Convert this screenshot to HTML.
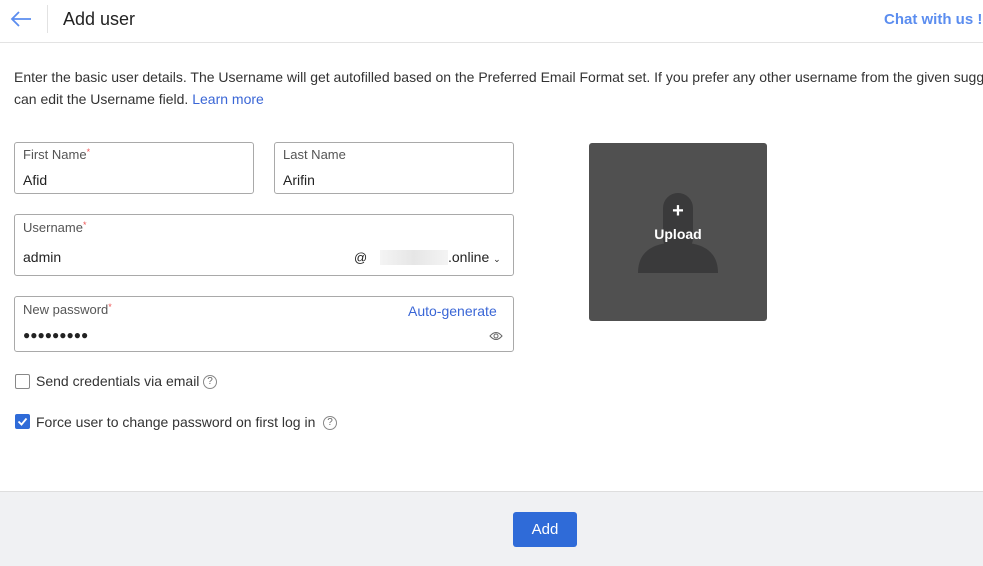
<!DOCTYPE html>
<html><head><style>
*{box-sizing:border-box;margin:0;padding:0}
html,body{width:983px;height:566px;overflow:hidden}
body{background:#fff;font-family:"Liberation Sans",sans-serif;color:#222;position:relative}
.abs{position:absolute}
.box{position:absolute;border:1px solid #a9a9a9;border-radius:3px}
.lbl{position:absolute;font-size:13px;color:#555}
.lbl i{color:#e55;font-style:normal;font-size:9px;vertical-align:top}
.val{position:absolute;font-size:14px;color:#222}
</style></head><body>
<svg class="abs" style="left:10px;top:11px" width="22" height="16" viewBox="0 0 22 16"><path d="M21 8H2M9 1L2 8l7 7" stroke="#5b8def" stroke-width="1.8" fill="none"/></svg>
<div class="abs" style="left:47px;top:5px;width:1px;height:28px;background:#e2e2e2"></div>
<div class="abs" style="left:63px;top:9px;font-size:18px;color:#222">Add user</div>
<div class="abs" style="left:884px;top:11px;font-size:15px;color:#5b8def;font-weight:bold;white-space:nowrap">Chat with us !</div>
<div class="abs" style="left:0;top:42px;width:983px;height:1px;background:#e3e3e3"></div>
<div class="abs" style="left:14px;top:66px;width:969px;overflow:hidden;font-size:14px;line-height:22px;color:#333;white-space:nowrap">Enter the basic user details. The Username will get autofilled based on the Preferred Email Format set. If you prefer any other username from the given suggestions, you<br>can edit the Username field. <span style="color:#3a66d6">Learn more</span></div>

<div class="box" style="left:14px;top:142px;width:240px;height:52px"></div>
<div class="lbl" style="left:23px;top:147px">First Name<i>*</i></div>
<div class="val" style="left:23px;top:172px">Afid</div>
<div class="box" style="left:274px;top:142px;width:240px;height:52px"></div>
<div class="lbl" style="left:283px;top:147px">Last Name</div>
<div class="val" style="left:283px;top:172px">Arifin</div>

<div class="box" style="left:14px;top:214px;width:500px;height:62px"></div>
<div class="lbl" style="left:23px;top:220px">Username<i>*</i></div>
<div class="val" style="left:23px;top:249px">admin</div>
<div class="val" style="left:354px;top:250px;font-size:13px">@</div>
<div class="abs" style="left:380px;top:250px;width:68px;height:15px;background:linear-gradient(90deg,#f4f4f4,#e6e6e6,#f4f4f4)"></div>
<div class="val" style="left:448px;top:249px">.online <span style="font-size:9px">⌄</span></div>

<div class="box" style="left:14px;top:296px;width:500px;height:56px"></div>
<div class="lbl" style="left:23px;top:302px">New password<i>*</i></div>
<div class="abs" style="left:408px;top:303px;font-size:14px;color:#3a66d6">Auto-generate</div>
<div class="val" style="left:23px;top:328px;font-size:12px;letter-spacing:0px">●●●●●●●●●</div>
<svg class="abs" style="left:489px;top:331px" width="14" height="10" viewBox="0 0 14 10"><path d="M1 5Q7-2 13 5Q7 12 1 5Z" fill="none" stroke="#666"/><circle cx="7" cy="5" r="2" fill="none" stroke="#666"/></svg>

<div class="abs" style="left:15px;top:374px;width:15px;height:15px;border:1px solid #888;border-radius:2px"></div>
<div class="abs" style="left:36px;top:373px;font-size:14px;color:#333">Send credentials via email</div>
<div class="abs" style="left:203px;top:375px;width:14px;height:14px;border:1px solid #888;border-radius:50%;font-size:10px;text-align:center;line-height:12px;color:#666">?</div>
<div class="abs" style="left:15px;top:414px;width:15px;height:15px;background:#2f6bd8;border-radius:2px"></div>
<svg class="abs" style="left:15px;top:414px" width="15" height="15"><path d="M3.5 7.5l3 3 5-6" stroke="#fff" stroke-width="1.8" fill="none"/></svg>
<div class="abs" style="left:36px;top:414px;font-size:14px;color:#333">Force user to change password on first log in</div>
<div class="abs" style="left:323px;top:416px;width:14px;height:14px;border:1px solid #888;border-radius:50%;font-size:10px;text-align:center;line-height:12px;color:#666">?</div>

<div class="abs" style="left:589px;top:143px;width:178px;height:178px;background:#505050;border-radius:3px"></div>
<svg class="abs" style="left:589px;top:143px" width="178" height="178"><rect x="74" y="50" width="30" height="60" rx="15" fill="#3a3a3b"/><path d="M49 130Q49 104 78 100H100Q129 104 129 130Z" fill="#3a3a3b"/></svg>
<div class="abs" style="left:589px;top:200px;width:178px;text-align:center;color:#fff;font-size:20px;font-weight:bold;line-height:22px">+</div>
<div class="abs" style="left:589px;top:226px;width:178px;text-align:center;color:#fff;font-size:14px;font-weight:bold">Upload</div>

<div class="abs" style="left:0;top:491px;width:983px;height:75px;background:#f0f1f3;border-top:1px solid #dedede"></div>
<div class="abs" style="left:513px;top:512px;width:64px;height:35px;background:#2f6bd8;border-radius:3px;color:#fff;font-size:15px;text-align:center;line-height:35px">Add</div>
</body></html>
